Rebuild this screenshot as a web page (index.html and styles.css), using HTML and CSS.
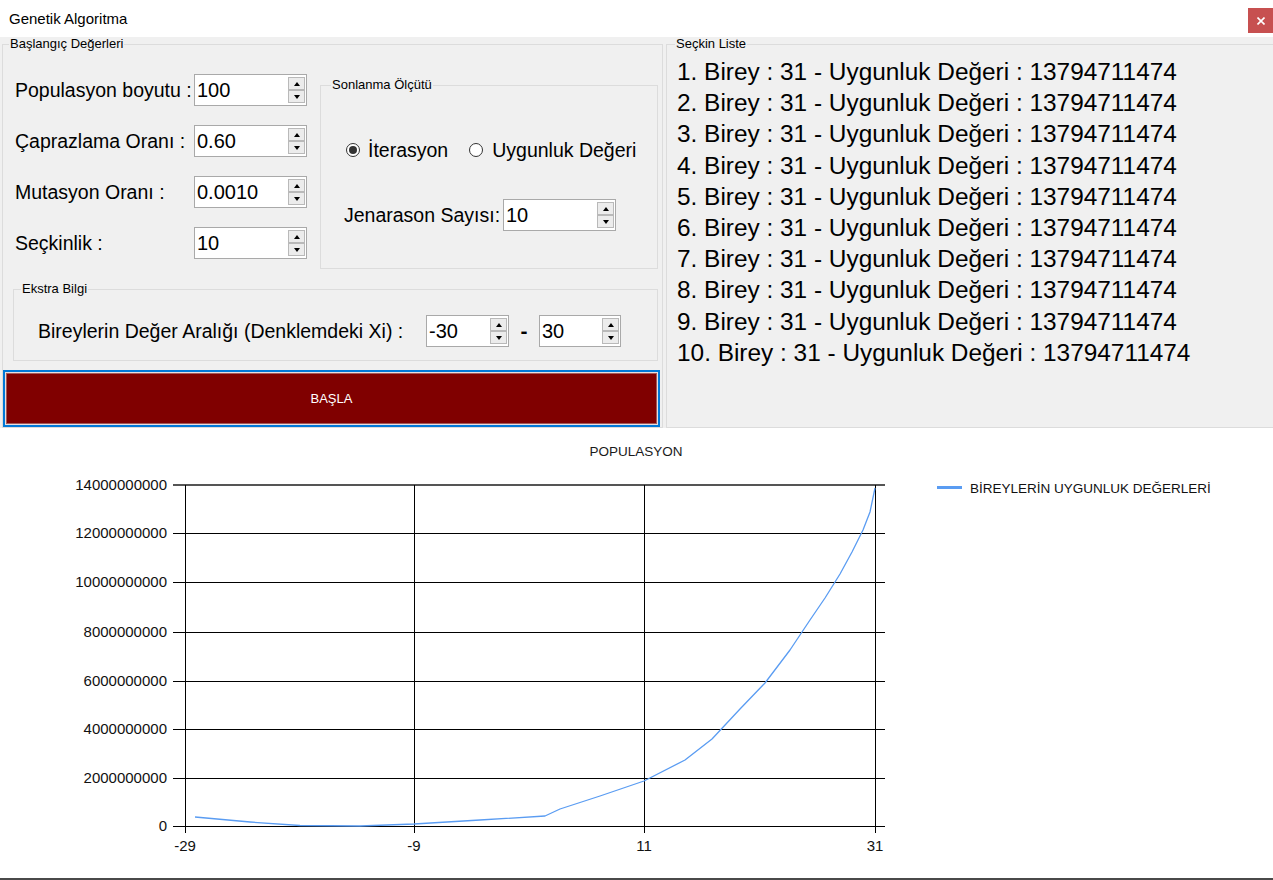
FILE: index.html
```html
<!DOCTYPE html>
<html lang="tr">
<head>
<meta charset="utf-8">
<title>Genetik Algoritma</title>
<link rel="stylesheet" href="styles.css">
</head>
<body>
<div class="window">
  <header class="titlebar">
    <span class="title">Genetik Algoritma</span>
    <span class="close"><svg class="close-x" width="8" height="8" viewBox="0 0 8 8"><path d="M0.5 0.5 L7.5 7.5 M7.5 0.5 L0.5 7.5"/></svg></span>
  </header>

  <main class="form">
    <fieldset class="group start">
      <legend>Başlangıç Değerleri</legend>
      <div class="start-body">
        <div class="start-top">
          <div class="params">
            <div class="row"><span class="lbl">Populasyon boyutu :</span><div class="spin w112"><span class="val">100</span><span class="btns"><span class="btn up"></span><span class="btn dn"></span></span></div></div>
            <div class="row"><span class="lbl">Çaprazlama Oranı :</span><div class="spin w112"><span class="val">0.60</span><span class="btns"><span class="btn up"></span><span class="btn dn"></span></span></div></div>
            <div class="row"><span class="lbl">Mutasyon Oranı :</span><div class="spin w112"><span class="val">0.0010</span><span class="btns"><span class="btn up"></span><span class="btn dn"></span></span></div></div>
            <div class="row"><span class="lbl">Seçkinlik :</span><div class="spin w112"><span class="val">10</span><span class="btns"><span class="btn up"></span><span class="btn dn"></span></span></div></div>
          </div>
          <fieldset class="group stop">
            <legend>Sonlanma Ölçütü</legend>
            <div class="stop-body">
              <div class="radios">
                <span class="radio"><span class="dot checked"></span>İterasyon</span>
                <span class="radio second"><span class="dot"></span>Uygunluk Değeri</span>
              </div>
              <div class="jen">
                <span class="jen-lbl">Jenarason Sayısı:</span>
                <div class="spin w112"><span class="val">10</span><span class="btns"><span class="btn up"></span><span class="btn dn"></span></span></div>
              </div>
            </div>
          </fieldset>
        </div>
        <fieldset class="group extra">
          <legend>Ekstra Bilgi</legend>
          <div class="extra-body">
            <span class="range-lbl">Bireylerin Değer Aralığı (Denklemdeki Xi) :</span>
            <div class="spin w83"><span class="val">-30</span><span class="btns"><span class="btn up"></span><span class="btn dn"></span></span></div>
            <span class="dash">-</span>
            <div class="spin w82"><span class="val">30</span><span class="btns"><span class="btn up"></span><span class="btn dn"></span></span></div>
          </div>
        </fieldset>
        <button class="run" type="button">BAŞLA</button>
      </div>
    </fieldset>

    <fieldset class="group elite">
      <legend>Seçkin Liste</legend>
      <div class="list">
        <div>1. Birey : 31 - Uygunluk Değeri : 13794711474</div>
        <div>2. Birey : 31 - Uygunluk Değeri : 13794711474</div>
        <div>3. Birey : 31 - Uygunluk Değeri : 13794711474</div>
        <div>4. Birey : 31 - Uygunluk Değeri : 13794711474</div>
        <div>5. Birey : 31 - Uygunluk Değeri : 13794711474</div>
        <div>6. Birey : 31 - Uygunluk Değeri : 13794711474</div>
        <div>7. Birey : 31 - Uygunluk Değeri : 13794711474</div>
        <div>8. Birey : 31 - Uygunluk Değeri : 13794711474</div>
        <div>9. Birey : 31 - Uygunluk Değeri : 13794711474</div>
        <div>10. Birey : 31 - Uygunluk Değeri : 13794711474</div>
      </div>
    </fieldset>
  </main>

  <section class="chart">
    <svg class="plot" width="1273" height="450" viewBox="0 0 1273 450">
      <text class="ctitle" x="636" y="28">POPULASYON</text>
      <g class="grid">
        <line class="topline" x1="173" y1="57" x2="885" y2="57"/>
        <line x1="173" y1="105.5" x2="885" y2="105.5"/>
        <line x1="173" y1="154.5" x2="885" y2="154.5"/>
        <line x1="173" y1="204.5" x2="885" y2="204.5"/>
        <line x1="173" y1="253.5" x2="885" y2="253.5"/>
        <line x1="173" y1="301.5" x2="885" y2="301.5"/>
        <line x1="173" y1="350.5" x2="885" y2="350.5"/>
        <line x1="173" y1="398.5" x2="885" y2="398.5"/>
        <line x1="185.5" y1="57" x2="185.5" y2="405"/>
        <line x1="414.5" y1="57" x2="414.5" y2="405"/>
        <line x1="644.5" y1="57" x2="644.5" y2="405"/>
        <line x1="875.5" y1="57" x2="875.5" y2="405"/>
      </g>
      <g class="ylabs">
        <text x="167" y="62">14000000000</text>
        <text x="167" y="110">12000000000</text>
        <text x="167" y="159">10000000000</text>
        <text x="167" y="209">8000000000</text>
        <text x="167" y="258">6000000000</text>
        <text x="167" y="306">4000000000</text>
        <text x="167" y="355">2000000000</text>
        <text x="167" y="403">0</text>
      </g>
      <g class="xlabs">
        <text x="185" y="423">-29</text>
        <text x="414" y="423">-9</text>
        <text x="644" y="423">11</text>
        <text x="875" y="423">31</text>
      </g>
      <polyline class="series" points="195,389 250,394 300,397.5 360,398 414,396 480,392 545,388 560,381 600,368 644,353 685,332 712,311 740,281 765,255 790,222 810,192 825,170 840,146 852,124 863,102 870,84 875,60"/>
      <line class="legend-line" x1="937" y1="59.5" x2="962" y2="59.5"/>
      <text class="legend-text" x="970" y="65">BİREYLERİN UYGUNLUK DEĞERLERİ</text>
    </svg>
  </section>
</div>
</body>
</html>
```

FILE: styles.css
```css
* { box-sizing: border-box; }
html, body { margin: 0; padding: 0; }
body {
  width: 1273px;
  height: 880px;
  overflow: hidden;
  background: #fff;
  color: #000;
  font-family: "Liberation Sans", Arial, sans-serif;
}

.window { width: 1273px; height: 880px; display: flex; flex-direction: column; }

/* title bar */
.titlebar {
  height: 37px;
  flex: none;
  display: flex;
  justify-content: space-between;
  background: #fff;
}
.title { font-size: 15px; line-height: 37px; padding-left: 9px; }
.close {
  width: 25px;
  height: 25px;
  margin-top: 8px;
  background: #c75050;
  display: flex;
  align-items: center;
  justify-content: center;
}
.close-x path { stroke: #fff; stroke-width: 1.6px; fill: none; }

/* form */
.form {
  height: 391px;
  flex: none;
  display: flex;
  background: #f0f0f0;
  overflow: hidden;
}
.group {
  margin: 0;
  padding: 0;
  border: 1px solid #dcdcdc;
  min-width: 0;
  flex: none;
}
.group > legend {
  font-size: 13px;
  line-height: 14px;
  padding: 0 1px;
  margin-left: 6px;
}

.group.start { margin-left: 2px; width: 661px; height: 391px; }
.start-body { display: flex; flex-direction: column; }
.start-top { display: flex; height: 218px; flex: none; }

.params {
  width: 305px;
  margin-left: 12px;
  padding-top: 23px;
  display: flex;
  flex-direction: column;
  gap: 19px;
  flex: none;
}
.row { display: flex; align-items: center; height: 32px; }
.lbl { width: 179px; font-size: 19.5px; white-space: nowrap; }

/* numeric up-down */
.spin {
  height: 32px;
  border: 1px solid #a9a9a9;
  background: #fff;
  display: flex;
  align-items: center;
  padding: 2px 1px 2px 2px;
  flex: none;
}
.w112 { width: 113px; }
.w83 { width: 83px; }
.w82 { width: 82px; }
.val { flex: 1; font-size: 20px; line-height: 26px; white-space: nowrap; }
.btns { width: 17px; height: 100%; display: flex; flex-direction: column; }
.btn {
  flex: 1;
  border: 1px solid #b9b9b9;
  background: #ececec;
  display: flex;
  align-items: center;
  justify-content: center;
}
.btn::before {
  content: "";
  width: 0;
  height: 0;
  border-left: 3.5px solid transparent;
  border-right: 3.5px solid transparent;
}
.up::before { border-bottom: 4px solid #000; }
.dn::before { border-top: 4px solid #000; }

/* stop criteria */
.group.stop { width: 338px; height: 191px; margin-top: 27px; }
.group.stop > legend { margin-left: 10px; }
.stop-body { padding: 46px 0 0 23px; }
.radios { display: flex; align-items: center; height: 24px; padding-left: 2px; font-size: 19.5px; }
.radio { display: flex; align-items: center; gap: 8px; white-space: nowrap; }
.radio.second { margin-left: 21px; gap: 9px; }
.dot {
  width: 14px;
  height: 14px;
  border: 1px solid #333;
  border-radius: 50%;
  background: #fff;
  display: flex;
  align-items: center;
  justify-content: center;
}
.dot.checked::after {
  content: "";
  width: 8px;
  height: 8px;
  border-radius: 50%;
  background: #333;
}
.jen { display: flex; align-items: center; margin-top: 37px; height: 32px; }
.jen-lbl { width: 159px; font-size: 19.5px; white-space: nowrap; }

/* extra info */
.group.extra { width: 645px; height: 79px; margin: 13px 0 0 10px; }
.group.extra > legend { margin-left: 7px; }
.extra-body { display: flex; align-items: center; padding: 19px 0 0 24px; }
.range-lbl { width: 388px; font-size: 19.5px; white-space: nowrap; }
.dash { width: 30px; text-align: center; font-size: 21px; font-weight: bold; }

/* start button */
.run {
  margin: 9px 0 0 0;
  width: 657px;
  height: 57px;
  flex: none;
  border: 2px solid #0078d7;
  background: #800000;
  box-shadow: inset 0 0 0 1px #eadede, inset 0 0 0 2px #a45a5a;
  color: #fff;
  font-family: "Liberation Sans", Arial, sans-serif;
  font-size: 13px;
  padding: 0;
}

/* elite list */
.group.elite { margin-left: 3px; width: 612px; height: 391px; }
.group.elite > legend { margin-left: 8px; }
.list {
  padding: 5px 0 0 10px;
  font-size: 24.4px;
  line-height: 31.2px;
  white-space: nowrap;
}

/* chart */
.chart {
  height: 452px;
  flex: none;
  background: #fff;
  border-bottom: 2px solid #4a4a4a;
}
.plot { display: block; }
.grid line { stroke: #000; stroke-width: 1px; shape-rendering: crispEdges; }
.grid line.topline { stroke: #555; stroke-width: 2px; }
.ctitle { font-family: "Liberation Sans", Arial, sans-serif; font-size: 13.5px; text-anchor: middle; fill: #1a1a1a; }
.ylabs text { font-family: "Liberation Sans", Arial, sans-serif; font-size: 15px; text-anchor: end; fill: #111; }
.xlabs text { font-family: "Liberation Sans", Arial, sans-serif; font-size: 15px; text-anchor: middle; fill: #111; }
.series { fill: none; stroke: #5a9cf2; stroke-width: 1.3px; stroke-linejoin: round; }
.legend-line { stroke: #5a9cf2; stroke-width: 3px; }
.legend-text { font-family: "Liberation Sans", Arial, sans-serif; font-size: 13.5px; fill: #111; }
```
